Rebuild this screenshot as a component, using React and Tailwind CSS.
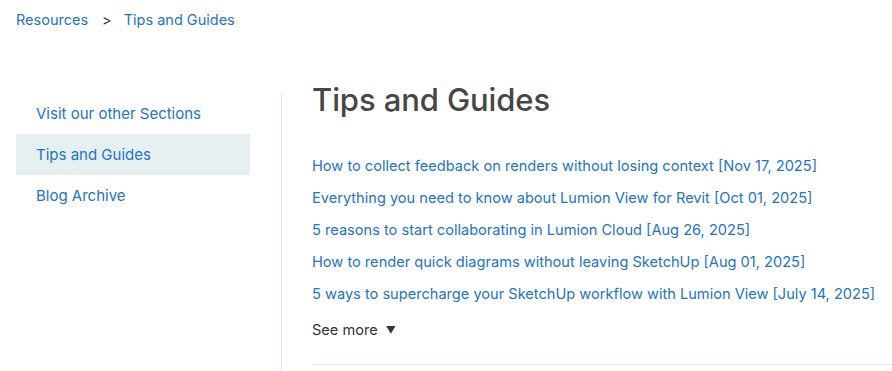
import React from 'react';

const posts = [
  'How to collect feedback on renders without losing context [Nov 17, 2025]',
  'Everything you need to know about Lumion View for Revit [Oct 01, 2025]',
  '5 reasons to start collaborating in Lumion Cloud [Aug 26, 2025]',
  'How to render quick diagrams without leaving SketchUp [Aug 01, 2025]',
  '5 ways to supercharge your SketchUp workflow with Lumion View [July 14, 2025]',
];

const sections = [
  { label: 'Visit our other Sections', active: false },
  { label: 'Tips and Guides', active: true },
  { label: 'Blog Archive', active: false },
];

const App = () => {
  return (
    <div className="min-h-screen bg-white font-['Inter','Liberation_Sans',sans-serif] overflow-hidden">
      {/* breadcrumb */}
      <nav className="flex items-center h-[40px] pl-4 text-[14.5px] text-[#2174c9]">
        <a href="#">Resources</a>
        <span className="ml-[14px] mr-[12px] text-[#333]">&gt;</span>
        <a href="#">Tips and Guides</a>
      </nav>

      <div className="flex pt-[53px]">
        <aside className="w-[234px] ml-4 shrink-0">
          <ul>
            {sections.map((s) => (
              <li key={s.label}>
                <a
                  href="#"
                  className={`block h-[41px] leading-[41px] pl-5 text-[15px] text-[#2174c9] ${s.active ? 'bg-[#e6f0f1]' : ''}`}
                >
                  {s.label}
                </a>
              </li>
            ))}
          </ul>
        </aside>

        <div className="ml-[31px] border-l border-[#dde8f3] pl-[30px] flex-1 min-w-0">
          <h1 className="text-[31px] leading-[40px] font-medium text-[#464646] mt-[-13px] tracking-[-0.1px]">
            Tips and Guides
          </h1>
          <ul className="mt-[36px] flex flex-col gap-[11px]">
            {posts.map((p) => (
              <li key={p}>
                <a href="#" className="block text-[14.6px] leading-[21px] text-[#2174c9] whitespace-nowrap">
                  {p}
                </a>
              </li>
            ))}
          </ul>
          <button className="mt-[15px] flex items-center text-[14.6px] leading-[21px] text-[#333]">
            See more
            <span className="ml-[8px] text-[10px]">▼</span>
          </button>
          <div className="mt-[23px] border-t border-[#dde8f3] pb-[20px]" />
        </div>
      </div>
    </div>
  );
};

export default App;
